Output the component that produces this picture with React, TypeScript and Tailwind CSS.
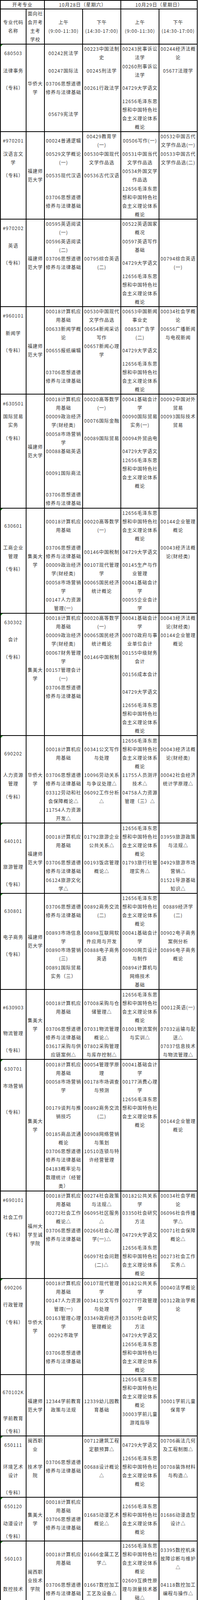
const U = 22.41;

// 常用课程
const M = "12656毛泽东思/想和中国特色社/会主义理论体系/概论";
const S = "03706思想道德/修养与法律基础";
const C = "00018计算机应/用基础";
const Y = "04729大学语文";

type Row = { n: number; h?: number; cells: string[] };

// 每格: "格数:行/行|格数:行" — 一格 ≈ 22.4px
const rows: Row[] = [
  { n: 10, cells: ["2:680503|2:法律事务|2:（专科）|4:", "10:华侨大/学", `2:00242民法学|2:00247国际法|2:${S}|4:05679宪法学`, "2:00223中国法制/史|2:00245刑法学|2:00261行政法学|4:", `2:00243民事诉讼/法学|2:00260刑事诉讼/法学|2:${Y}|4:${M}`, "2:00244经济法概/论|2:05677法理学|6:"] },
  { n: 10, cells: ["2:#970201|2:汉语言文/学|2:（专科）|4:", "10:福建师/范大学", `2:00024普通逻辑|2:00529文学概论/(一)|2:00535现代汉语|4:${S}`, "2:00429教育学/(一)|2:00530中国现代/文学作品选|2:00536古代汉语|4:", `2:00506写作(一)|2:00531中国当代/文学作品选|2:00534外国文学/作品选|4:${M}`, "2:00532中国古代/文学作品选(一)|2:00533中国古代/文学作品选(二)|6:"] },
  { n: 10, cells: ["2:#970202|2:英语|2:（专科）|4:", "10:福建师/范大学", `2:00595英语阅读/(一)|2:00596英语阅读/(二)|2:${S}|4:`, "4:|2:00795综合英语/(二)|4:", `2:00522英语国家/概况|2:00597英语写作/基础|2:${Y}|4:${M}`, "4:|2:00794综合英语/(一)|4:"] },
  { n: 10, cells: ["2:#960101|2:新闻学|2:（专科）|4:", "10:福建师/范大学", `2:${C}|2:00633新闻学概/论|2:00655报纸编辑|4:${S}`, "2:00530中国现代/文学作品选|2:00654新闻采访/写作|2:00657新闻心理/学|4:", `2:00653中国新闻/事业史|2:00853广告学/(二)|2:${Y}|4:${M}`, "2:00034社会学概/论|2:00656广播新闻/与电视新闻|6:"] },
  { n: 13, cells: ["2:#630501|2:国际贸易/实务|2:（专科）|7:", "13:福建师/范大学", `2:${C}|2:00009政治经济/学(财经类)|2:00058市场营销/学|1:00088基础英语|4:00091国际商法|2:${S}`, "2:00020高等数学/(一)|2:00076国际金融|2:00089国际贸易|7:", `2:00041基础会计/学|2:00090国际贸易/实务(一)|2:00094外贸函电|1:${Y}|4:${M}|2:`, "2:00092中国对外/贸易|2:00093国际技术/贸易|9:"] },
  { n: 12, cells: ["4:630601|2:工商企业/管理|2:（专科）|4:", "12:集美大/学", `4:${C}|2:${S}|2:00009政治经济/学(财经类)|2:00058市场营销/学|2:00147人力资源/管理(一)`, "4:00020高等数学/(一)|2:00146中国税制|2:00107现代管理/学|2:00065国民经济/统计概论|2:", `4:${M}|2:${Y}|2:00145生产与作/业管理|2:00041基础会计/学|2:00055企业会计/学`, "4:00144企业管理/概论|2:00043经济法概/论(财经类)|6:"] },
  { n: 14, cells: ["2:630302|2:会计|2:（专科）|8:", "14:集美大/学", `2:${C}|2:00009政治经济/学(财经类)|2:00067财务管理/学|2:00157管理会计/(一)|2:${S}|4:`, "2:00020高等数学/(一)|2:00065国民经济/统计概论|2:00146中国税制|8:", `2:00041基础会计/学|2:00070政府与事/业单位会计|2:00155中级财务/会计|2:00156成本会计|2:${Y}|4:${M}`, "2:00043经济法概/论(财经类)|2:00144企业管理/概论|10:"] },
  { n: 10, cells: ["4:690202|2:人力资源/管理|2:（专科）|2:", "10:华侨大/学", `4:${C}|2:${S}|2:03312劳动和社/会保障概论△|2:11754人力资源/开发△`, "4:00341公文写作/与处理|2:10096劳动关系/与争议处理△|2:06092工作分析/△|2:", `4:${M}|2:11755人员测评/技术△|2:04758人力资源/管理（三）△|2:`, "4:00043经济法概/论(财经类)|2:00042社会经济/统计学原理△|4:"] },
  { n: 8, cells: ["4:640101|2:旅游管理|2:（专科）", "8:福建师/范大学", `4:${C}|2:${S}|2:06124旅游文化/学△`, "4:01792旅游企业/公共关系△|2:00193饭店管理/概论△|2:", `4:${M}|2:01793旅行社管/理实务△|2:`, "4:03959旅游政策/与法规△|2:04929旅游市场/营销△|2:01521导游基础/知识△"] },
  { n: 11, cells: ["4:630801|2:电子商务|2:（专科）|3:", "11:福建师/范大学", `4:${S}|2:00893市场信息/学|2:00890市场营销/(三)|2:00891国际贸易/实务（三）|1:`, "4:00892商务交流/(二)|2:00898互联网软/件应用与开发|2:00888电子商务/英语|3:", `4:${M}|2:00041基础会计/学|2:00900网页设计/与制作|3:00894计算机与/网络技术/基础`, "4:00889经济学/(二)|2:00902电子商务/案例分析|2:00896电子商务/概论|3:"] },
  { n: 8, cells: ["4:#630903|2:物流管理|2:（专科）", "8:集美大/学", `4:${C}|2:${S}|2:03617采购与供/应链案例△`, "4:07008采购与仓/储管理△|2:07031物流管理/概论△|2:07802采购管理/与库存控制△", `4:${M}|2:01001物流案例/与实训△|2:`, "4:00012英语(一)|2:07032运输与配/送△|2:07037信息技术/与物流管理△"] },
  { n: 15, cells: ["2:630701|2:市场营销|4:（专科）|7:", "15:集美大/学", `2:${C}|2:00058市场营销/学|4:00179谈判与推/销技巧|2:00185商品流通/概论|2:${S}|3:04183概率论与/数理统计（经管/类）`, "2:00054管理学原/理|2:00178市场调查/与预测|4:00892商务交流/(二)|2:00908网络营销/与策划|2:10510连锁与特/许经营管理|3:", `2:00041基础会计/学|2:00177消费心理/学|4:${M}|7:`, "15:00144企业管理/概论"] },
  { n: 10, cells: ["2:#690101|2:社会工作|2:（专科）|4:", "10:福州大/学至诚/学院", `2:${C}|2:00272社会工作/概论△|2:${S}|4:`, "2:00274社会政策/与法规△|2:06095社区服务/△|2:00266社会心理/学(一)△|4:06097社会问题/(二)△", `2:00182公共关系/学|2:03350社会研究/方法|2:${Y}|4:${M}`, "2:00034社会学概/论|2:06096社会传播/学△|2:00071社会保障/概论△|4:00273社会工作/实务△"] },
  { n: 11, cells: ["2:690206|2:行政管理|2:（专科）|5:", "11:华侨大/学", `2:${C}|2:00147人力资源/管理(一)|2:00163管理心理/学|1:00292市政学|4:${S}`, "2:00107现代管理/学|2:00341公文写作/与处理|2:03349政府经济/管理概论|5:", `2:00182公共关系/学|2:00277行政管理/学|2:03350社会研究/方法|1:${Y}|4:${M}`, "2:00040法学概论|2:00312政治学概/论|7:"] },
  { n: 7, cells: ["4:670102K|2:学前教育|1:（专科）", "7:福建师/范大学", "7:12344学前教育/政策与法规", "7:12339幼儿园教/育基础", `4:${M}|2:30003学前儿童/游戏指导|1:`, "7:30001学前儿童/保育学"] },
  { n: 7, cells: ["2:650111|4:环境艺术/设计|1:（专科）", "2:闽西职/业|4:技术学/院|1:", `7:${S}`, "2:00712建筑工程/定额预算△|4:00688设计概论/△|1:", `2:${Y}|4:${M}|1:`, "2:00706画法几何/及工程制图△|4:00708装饰材料/与构造△|1:"] },
  { n: 5, cells: ["2:650120|2:动漫设计|1:（专科）", "5:集美大/学", `2:${C}|2:${S}|1:`, "5:01685动漫艺术/概论△", `5:${M}`, "5:01686动漫造型/设计△"] },
  { n: 9, cells: ["4:560103|3:数控技术|2:（专科）", "9:闽西职/业技术/学院", `4:${C}|3:${S}|2:`, "4:01666金属工艺/学△|3:01667数控加工/工艺及设备△|2:", `4:${M}|3:02609互换性原/理与测量技术基/础△|2:`, "4:03395数控机床/故障诊断与维护/△|3:04118数控加工/编程与操作△|2:04108电工电子/技术基础△"] },
  { n: 6, cells: ["2:610202|2:计算机网/络技术|2:（专科）", "6:集美大/学", `2:${C}|2:${S}|2:01807网络互联/设备△`, "2:01805网络综合/布线△|2:01797数据库应/用△|2:", `6:${M}`, "2:01802网站设计/与管理△|2:07983计算机组/装与维护△|2:"] },
  { n: 8, cells: ["4:610205|2:软件技术|2:（专科）", "8:集美大/学", `4:${C}|2:${S}|2:08674计算机网/络基础△`, "4:04693网页设计/△|2:09043C#程序/设计△|2:04001数据库原/理与程序设计△", `4:${M}|2:07186软件技术/基础△|2:`, "4:09042Web程/序设计△|2:02323操作系统/概论|2:"] },
  { n: 10, cells: ["4:#540502|2:工程造价|2:（专科）|2:", "10:福建工/程学院", `4:${S}|2:06960合同法与/合同管理△|2:06964土建工程/计量△|2:06961工程财务/△`, "4:06963工程项目/管理与监理△|2:06956经济应用/数学△|2:06962工程造价/确定与控制△|2:06958建筑工程/识图与构造△", `4:${M}|2:${Y}|2:06968安装工程/技术与计量△|2:`, "4:|2:06959工程经济/概论△|2:06966土建工程/施工与计划△|2:06969工程造价/案例分析△"] },
  { n: 10, cells: ["4:#560702|4:汽车检测/与维修技/术（专/科）|2:", "10:闽西职/业技术/学院", `4:${C}|4:${S}|2:05870汽车售后/服务管理△`, "4:05872汽车营销/案例分析△|4:04024应用写作/概论△|2:05868职业道德/与礼仪△", `4:${M}|4:${Y}|2:`, "4:|4:00012英语(一)|2:05871汽车营销/技术△"] },
  { n: 10, cells: ["4:540501|2:建设工程/管理|2:（专科）|2:", "10:闽西职/业技术/学院", `4:${C}|2:${S}|2:08768房屋构造/与维护管理△|2:04053建筑材料/学△`, "4:01850建筑施工/技术△|2:04063建筑工程/测量△|4:", `4:${M}|2:01564工程建设/监理概论△|2:10029安全管理/与生产技术△|2:`, "4:03894施工项目/管理△|2:04059建筑工程/施工及组织△|2:00975工程概预/算△|2:"] },
  { n: 16, h: 352, cells: ["4:*620201|4:护理|2:（专科）|6:", "8:上半/年：福/建医科/大学/下半/年：厦/门医学/院|8:", `4:00488健康教育/学|4:02901病理学|2:02997护理学基/础|2:${S}|4:`, "4:02903药理学/(一)|4:02996护理伦理/学|2:03000营养学|2:03179生物化学/(三)|4:", `4:02113医学心理/学|4:02864微生物学/与免疫学基础|2:02998内科护理/学(一)|2:${Y}|4:${M}`, "4:02899生理学|4:03001外科护理/学（一）|2:03002妇产科护/理学(一)|2:03003儿科护理/学(一)|4:"] },
];

function parse(cell: string) {
  return cell.split("|").map((b) => {
    const i = b.indexOf(":");
    const text = b.slice(i + 1);
    return { n: Number(b.slice(0, i)), lines: text ? text.split("/") : [] };
  });
}

const GRID = "grid grid-cols-[66px_47px_98px_98px_98px_98px]";
const CELL = "relative flex min-h-0 flex-col overflow-hidden border-r-2 border-b-2 border-black";

function Lines({ lines }: { lines: string[] }) {
  return (
    <>
      {lines.map((l, j) => (
        <div key={j} className="h-[22px] shrink-0 whitespace-nowrap leading-[22px]">
          {l}
        </div>
      ))}
    </>
  );
}

function Cell({ spec, unit, mark }: { spec: string; unit: number; mark?: boolean }) {
  return (
    <div className={CELL}>
      {mark && (
        <svg className="absolute left-0 top-0" width="5" height="5" viewBox="0 0 5 5">
          <polygon points="0,0 5,0 0,5" fill="#1f8a1f" />
        </svg>
      )}
      {parse(spec).map((b, i) => (
        <div
          key={i}
          className="flex shrink-0 flex-col items-center justify-center"
          style={{ height: b.n * unit }}
        >
          <Lines lines={b.lines} />
        </div>
      ))}
    </div>
  );
}

function Header() {
  const head = (lines: string[]) => (
    <div className={`${CELL} items-center justify-center`}>
      <Lines lines={lines} />
    </div>
  );
  return (
    <>
      <div className={`${GRID} h-[22px]`}>
        <div className={`${CELL} col-span-2 items-center justify-center leading-[20px]`}>开考专业</div>
        <div className={`${CELL} col-span-2 items-center justify-center leading-[20px]`}>10月28日（星期六）</div>
        <div className={`${CELL} col-span-2 items-center justify-center leading-[20px]`}>10月29日（星期日）</div>
      </div>
      <div className={`${GRID} h-[90px]`}>
        {head(["专业代码", "名称"])}
        {head(["面向社", "会开考", "主考", "学校"])}
        {head(["上午", "(9:00-11:30)"])}
        {head(["下午", "(14:30-17:00)"])}
        {head(["上午", "(9:00-11:30)"])}
        {head(["下午", "(14:30-17:00)"])}
      </div>
    </>
  );
}

export default function App() {
  return (
    <div className="w-[508px] bg-white font-['Noto_Sans_CJK_SC',sans-serif] text-[12px] leading-[22px] tracking-[1px] text-[#333333]">
      <div className="w-[507px] border-t-2 border-l-2 border-black">
        <Header />
        {rows.map((r, i) => {
          const h = r.h ?? r.n * U;
          const unit = (h - 2) / r.n;
          const code = parse(r.cells[0])[0].lines[0] ?? "";
          return (
            <div key={i} className={GRID} style={{ height: h }}>
              {r.cells.map((c, j) => (
                <Cell key={j} spec={c} unit={unit} mark={j === 0 && /^\d+$/.test(code)} />
              ))}
            </div>
          );
        })}
      </div>
    </div>
  );
}
